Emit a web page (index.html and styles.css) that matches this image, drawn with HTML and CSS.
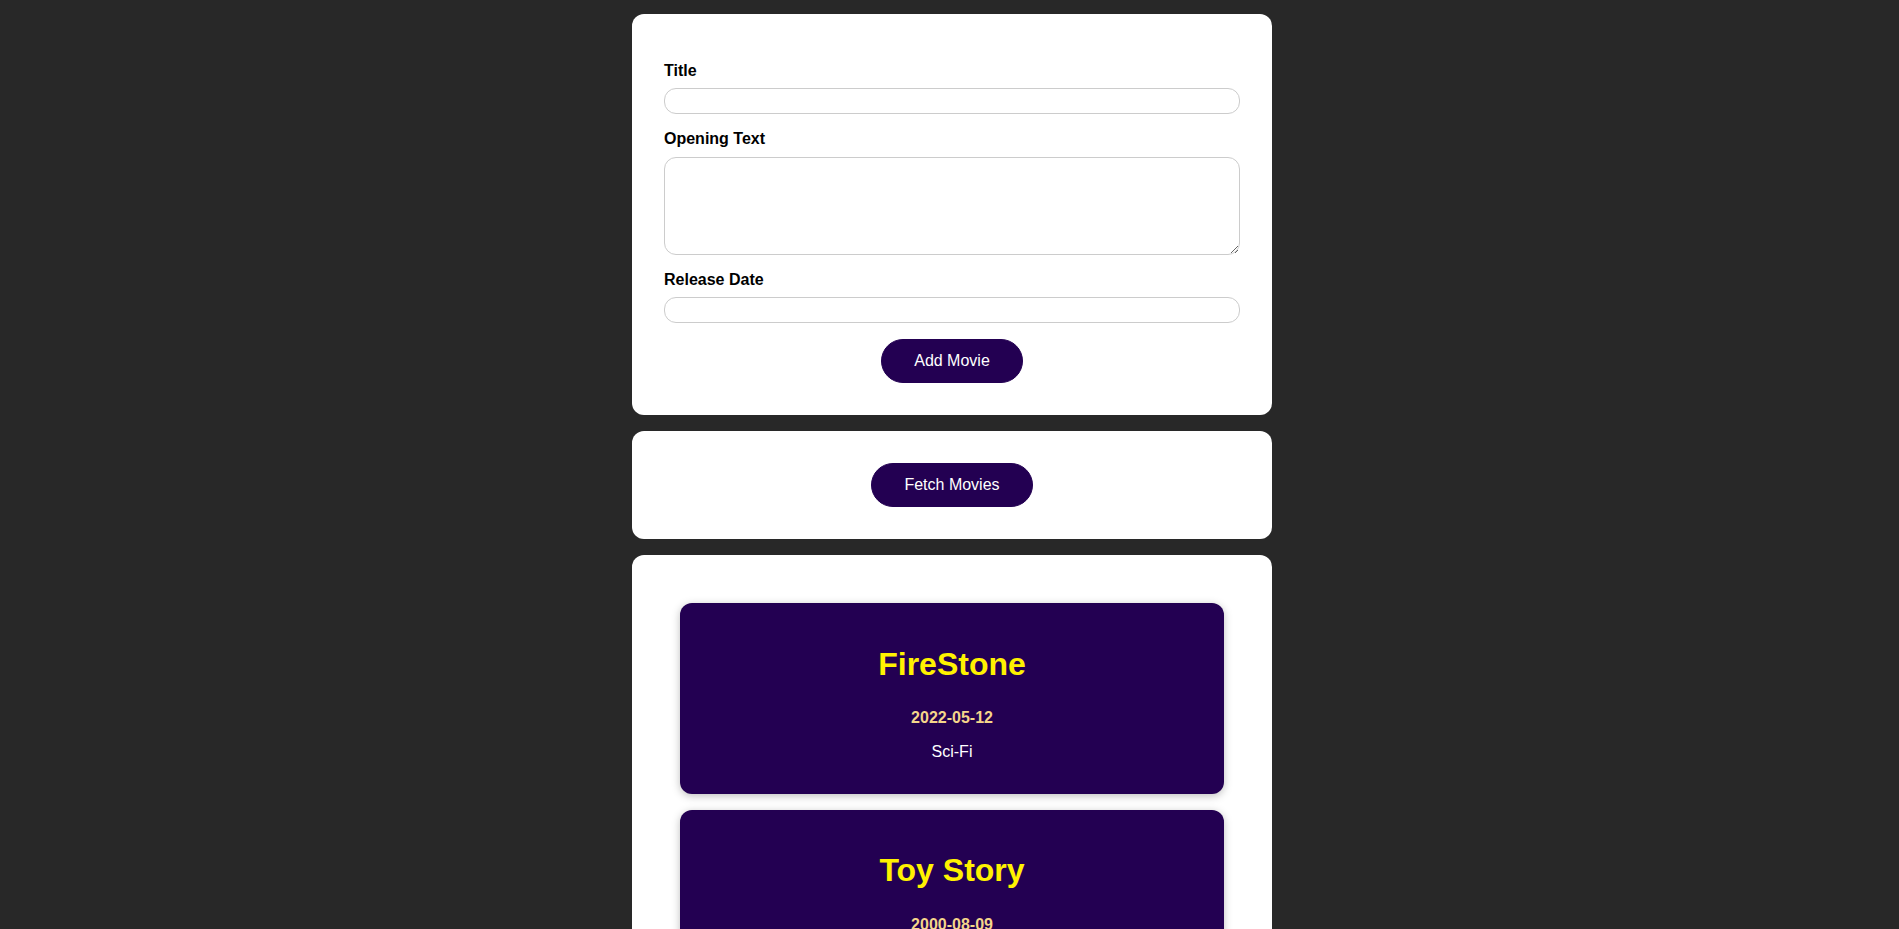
FILE: index.html
```html
<!DOCTYPE html>
<html lang="en">
<head>
  <meta charset="UTF-8">
  <meta name="viewport" content="width=device-width, initial-scale=1.0">
  <title>React Movies</title>
  <link rel="stylesheet" href="styles.css">
</head>
<body>

<div class="page">
  <section>
    <form id="movie-form">
      <div class="control">
        <label for="title">Title</label>
        <input type="text" id="title">
      </div>
      <div class="control">
        <label for="opening-text">Opening Text</label>
        <textarea id="opening-text" rows="5"></textarea>
      </div>
      <div class="control">
        <label for="date">Release Date</label>
        <input type="text" id="date">
      </div>
      <div class="actions">
        <button type="submit">Add Movie</button>
      </div>
    </form>
  </section>

  <section>
    <button type="button">Fetch Movies</button>
  </section>

  <section>
    <ul class="movies-list">
      <li class="movie">
        <h2>FireStone</h2>
        <h3>2022-05-12</h3>
        <p>Sci-Fi</p>
      </li>
      <li class="movie">
        <h2>Toy Story</h2>
        <h3>2000-08-09</h3>
        <p>Animation</p>
      </li>
    </ul>
  </section>
</div>

</body>
</html>
```

FILE: styles.css
```css
/* Base */
* {
  box-sizing: border-box;
}

body {
  margin: 0;
  font-family: 'Liberation Sans', Arial, sans-serif;
  line-height: 1.15;
  background-color: #282828;
}

.page {
  padding: 14px 0 0 5px;
  display: flex;
  flex-direction: column;
  gap: 16px;
}

/* Sections */
section {
  width: 640px;
  margin: 0 auto;
  padding: 32px;
  border-radius: 12px;
  background-color: #ffffff;
  text-align: center;
}

/* Buttons */
button {
  font: inherit;
  line-height: 18px;
  height: 44px;
  cursor: pointer;
  background-color: #230052;
  border: 1px solid #230052;
  color: #ffffff;
  padding: 12px 32px;
  border-radius: 22px;
}

button:hover {
  background-color: #33007a;
}

/* Form */
.control {
  margin: 16px 0;
  text-align: left;
}

.control label {
  display: block;
  font-weight: bold;
  line-height: 18.4px;
  margin-bottom: 8px;
}

.control input,
.control textarea {
  display: block;
  width: 100%;
  font: inherit;
  padding: 2px 3px;
  border: 1px solid #cccccc;
  border-radius: 12px;
}

.control input {
  height: 26px;
}

.control textarea {
  height: 98px;
}

.actions {
  margin-top: 16px;
}

/* Movies */
.movies-list {
  list-style: none;
  margin: 0;
  padding: 0;
}

.movie {
  margin: 16px;
  padding: 16px;
  border-radius: 12px;
  box-shadow: 0 2px 8px rgba(0, 0, 0, 0.26);
  background-color: #230052;
  color: #ffffff;
}

.movie h2 {
  font-size: 32px;
  margin: 26.5px 0;
  color: #fff200;
}

.movie h3 {
  font-size: 16px;
  margin: 16px 0;
  color: #f5d68a;
}

.movie p {
  margin: 16px 0;
}
```
